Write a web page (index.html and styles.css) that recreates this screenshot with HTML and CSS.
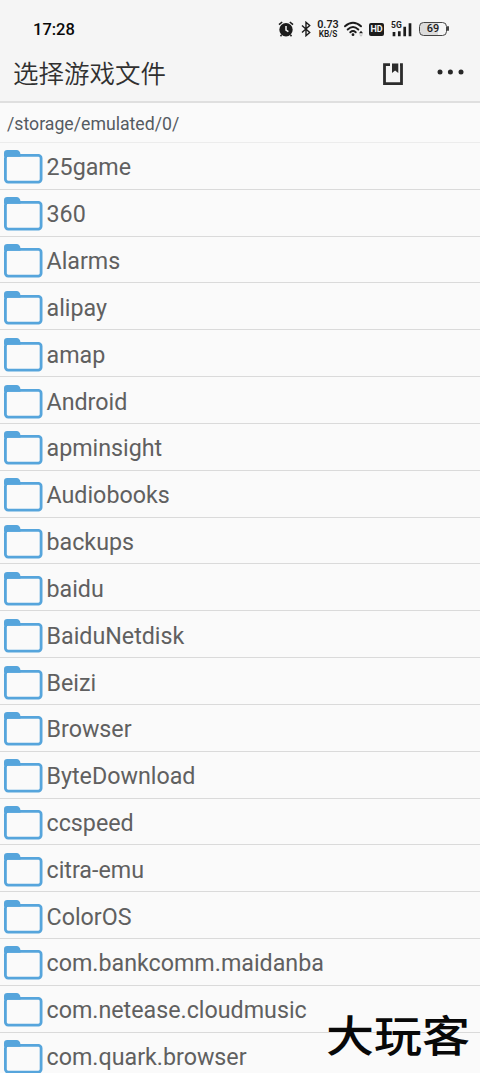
FILE: index.html
```html
<!DOCTYPE html>
<html lang="zh-CN">
<head>
<meta charset="utf-8">
<title>选择游戏文件</title>
<link rel="stylesheet" href="styles.css">
</head>
<body>
<svg class="defs" width="0" height="0" aria-hidden="true">
  <symbol id="folder" viewBox="0 0 40 36">
    <rect x="2.400" y="6.400" width="35.700" height="26.700" rx="2.800" fill="#fafafa" stroke="#56a5dc" stroke-width="2.800"/>
    <path d="M1 7.800V4Q1 1 4.200 1H13.500Q17 1 17.500 5.500V7.800Z" fill="#56a5dc"/>
  </symbol>
</svg>
<div class="screen">
  <header class="top">
    <div class="status">
      <span class="clock">17:28</span>
      <div class="indicators">
        <svg class="alarm" width="16" height="18" viewBox="0 0 16 18"><circle cx="8" cy="9.800" r="6.700" fill="#1c1c1c"/><path d="M1 4.600 4.200 2M11.800 2 15 4.600M3.500 15 2.500 16.200M12.500 15l1 1.200" stroke="#1c1c1c" stroke-width="1.600" fill="none"/><path d="M8 6v4l2.400 1.700" stroke="#f5f5f5" stroke-width="1.500" fill="none"/></svg>
        <svg class="bt" width="10" height="16" viewBox="0 0 10 16"><path d="M1 4.500 8.700 11.500 5 14.700V1.300L8.700 4.500 1 11.500" stroke="#1c1c1c" stroke-width="1.400" fill="none"/></svg>
        <span class="speed"><b>0.73</b><i>KB/S</i></span>
        <svg class="wifi" width="20" height="17" viewBox="0 0 20 17"><path d="M1 5.300Q9 -1.700 17 5.300M3.700 8.500Q9 3.700 14.300 8.500M6.300 11.300Q9 8.900 11.700 11.300" stroke="#1c1c1c" stroke-width="1.900" fill="none" stroke-linecap="round"/><circle cx="9" cy="13.700" r="1.400" fill="#1c1c1c"/><path d="M15 12.200 17 9.800 19 12.200Z" fill="#1c1c1c"/><path d="M15 13.500h4l-2 2.300Z" fill="#c4c4c4"/></svg>
        <span class="hd">HD</span>
        <span class="signal"><small>5G</small><svg width="20" height="15" viewBox="0 0 20 15"><path d="M2 10v4.300M7.300 9.200v5.100M12.700 4.800v9.500M18 1.200v13.100" stroke="#1c1c1c" stroke-width="2.700" fill="none"/></svg></span>
        <span class="battery">69</span>
      </div>
    </div>
    <div class="toolbar">
      <h1>选择游戏文件</h1>
      <svg class="bookmark" width="20" height="23" viewBox="0 0 20 23"><path d="M7 1.700H1.500V20.700H18.500V1.700H17" fill="none" stroke="#2c2c2c" stroke-width="2.800"/><path d="M9 .4H15.300V10L12.100 7.400 9 10Z" fill="#2c2c2c"/></svg>
      <svg class="more" width="27" height="6" viewBox="0 0 27 6"><g fill="#282828"><circle cx="3" cy="3" r="2.500"/><circle cx="13.400" cy="3" r="2.500"/><circle cx="24" cy="3" r="2.500"/></g></svg>
    </div>
  </header>
  <div class="path">/storage/emulated/0/</div>
  <ul class="files">
    <li><svg><use href="#folder"/></svg><span>25game</span></li>
    <li><svg><use href="#folder"/></svg><span>360</span></li>
    <li><svg><use href="#folder"/></svg><span>Alarms</span></li>
    <li><svg><use href="#folder"/></svg><span>alipay</span></li>
    <li><svg><use href="#folder"/></svg><span>amap</span></li>
    <li><svg><use href="#folder"/></svg><span>Android</span></li>
    <li><svg><use href="#folder"/></svg><span>apminsight</span></li>
    <li><svg><use href="#folder"/></svg><span>Audiobooks</span></li>
    <li><svg><use href="#folder"/></svg><span>backups</span></li>
    <li><svg><use href="#folder"/></svg><span>baidu</span></li>
    <li><svg><use href="#folder"/></svg><span>BaiduNetdisk</span></li>
    <li><svg><use href="#folder"/></svg><span>Beizi</span></li>
    <li><svg><use href="#folder"/></svg><span>Browser</span></li>
    <li><svg><use href="#folder"/></svg><span>ByteDownload</span></li>
    <li><svg><use href="#folder"/></svg><span>ccspeed</span></li>
    <li><svg><use href="#folder"/></svg><span>citra-emu</span></li>
    <li><svg><use href="#folder"/></svg><span>ColorOS</span></li>
    <li><svg><use href="#folder"/></svg><span>com.bankcomm.maidanba</span></li>
    <li><svg><use href="#folder"/></svg><span>com.netease.cloudmusic</span></li>
    <li><svg><use href="#folder"/></svg><span>com.quark.browser</span></li>
  </ul>
  <div class="watermark">大玩客</div>
</div>
</body>
</html>
```

FILE: styles.css
```css
* { box-sizing: border-box; }
body { margin: 0; font-family: Roboto, "Noto Sans CJK SC", sans-serif; background: #fafafa; }
.defs { position: absolute; }
.screen { position: relative; width: 480px; height: 1073px; overflow: hidden; background: #fafafa; }
.top { height: 103px; background: #f5f5f5; border-bottom: 2px solid #dfdfdf; }
.status { height: 48px; padding: 10px 30px 0 33px; display: flex; justify-content: space-between; align-items: center; }
.clock { font-size: 16.5px; font-weight: 500; color: #080808; }
.indicators { display: flex; align-items: center; color: #1c1c1c; }
.alarm { margin-right: 7px; }
.bt { margin-right: 6px; }
.speed { display: flex; flex-direction: column; align-items: center; gap: 1px; width: 22px; margin-right: 5px; }
.speed b { font-size: 10.8px; line-height: 8px; font-weight: 600; }
.speed i { font-size: 8.3px; line-height: 8px; font-weight: 600; font-style: normal; }
.wifi { margin-right: 5px; }
.hd { width: 15px; height: 13px; border-radius: 2px; background: #1c1c1c; color: #f5f5f5; font-size: 9px; line-height: 13px; font-weight: 700; text-align: center; margin-right: 8px; }
.signal { position: relative; display: flex; margin-right: 7px; }
.signal small { position: absolute; left: -1px; top: -1px; font-size: 8.5px; line-height: 9px; font-weight: 700; }
.battery { position: relative; width: 28px; height: 14px; margin-right: 3px; border: 1.5px solid #444; border-radius: 4.5px; background: linear-gradient(90deg, #dcdcdc 69%, #f5f5f5 69%); font-size: 11px; line-height: 12px; font-weight: 500; text-align: center; }
.battery::after { content: ""; position: absolute; right: -3px; top: 3px; width: 2px; height: 5px; background: #444; border-radius: 1px; }
.toolbar { height: 53px; padding: 0 16px 5px 13px; display: flex; align-items: center; }
h1 { margin: 0 auto 0 0; font-family: "Noto Sans CJK SC", sans-serif; font-size: 25.5px; line-height: 36px; font-weight: 350; color: #303030; }
.bookmark { margin: 5px 34px 0 0; }
.path { height: 40px; padding: 1px 0 0 7px; border-bottom: 1px solid #ececec; font-size: 17.7px; line-height: 41px; color: #555b62; }
.files { margin: 0; padding: 0; list-style: none; }
.files li { height: 46.84px; padding: 3px 0 0 3px; display: flex; align-items: center; gap: 3.5px; border-bottom: 1px solid #dadada; font-size: 23.25px; color: #606060; }
.files svg { width: 40px; height: 36px; }
.files span { line-height: 30px; white-space: nowrap; }
.watermark { position: absolute; left: 326px; top: 1005px; font-family: "Noto Sans CJK SC", sans-serif; font-size: 48px; line-height: 56px; font-weight: 500; color: #080808; transform: scaleY(.9); }
```
